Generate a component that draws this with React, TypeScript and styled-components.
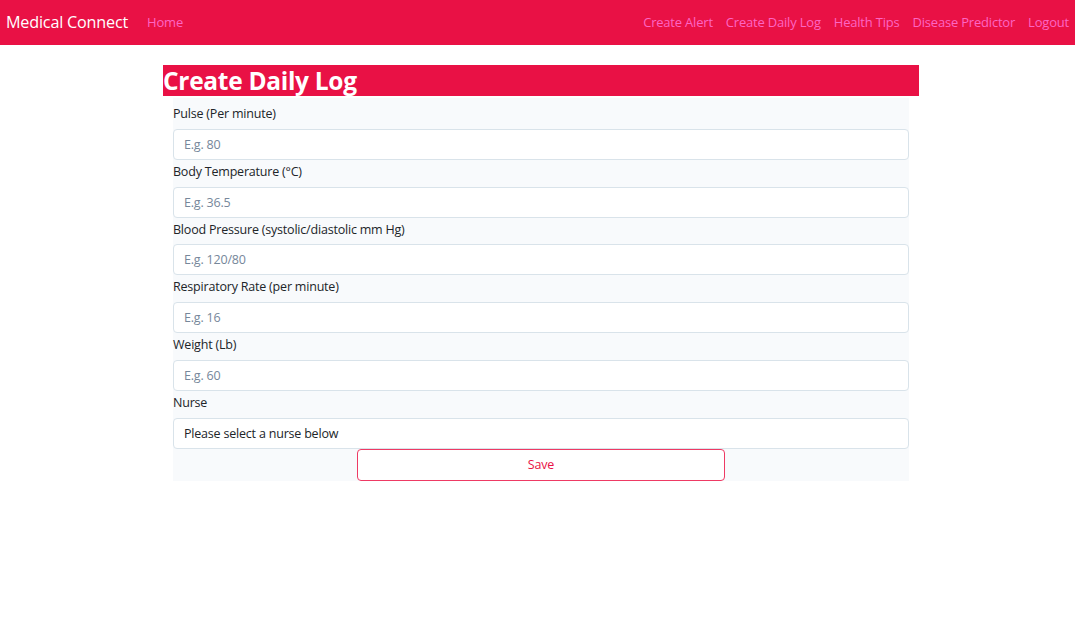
import React from "react";
import styled, { createGlobalStyle } from "styled-components";

const Global = createGlobalStyle`
  html, body { margin: 0; padding: 0; background: #fff; }
  body { font-family: "Open Sans", "Noto Sans", Arial, sans-serif; color: #212529; }
  * { box-sizing: border-box; }
`;

const Navbar = styled.nav`
  height: 45px;
  background: #e91145;
  display: flex;
  align-items: center;
  justify-content: space-between;
  padding: 0 6px 1px;
`;

const Left = styled.div`
  display: flex;
  align-items: center;
  gap: 19px;
`;

const Brand = styled.a`
  color: #fff;
  font-size: 16.2px;
  letter-spacing: -0.2px;
  text-decoration: none;
`;

const NavLinks = styled.div`
  display: flex;
  align-items: center;
  gap: 13px;
`;

const NavLink = styled.a`
  color: #fd65c4;
  font-size: 13px;
  letter-spacing: -0.2px;
  text-decoration: none;
`;

const Main = styled.main`
  width: 756px;
  margin: 20px 0 0 163px;
`;

const Title = styled.h1`
  margin: 0;
  height: 31px;
  background: #e91145;
  color: #fff;
  font-size: 24.5px;
  font-weight: 700;
  line-height: 31px;
  letter-spacing: -0.3px;
`;

const Form = styled.form`
  margin: 2px 10px 0;
  padding-top: 4px;
  background: #f8fafc;
  display: flex;
  flex-direction: column;
`;

const Field = styled.div`
  display: flex;
  flex-direction: column;
`;

const Label = styled.label`
  font-size: 12.5px;
  letter-spacing: -0.2px;
  height: 26.8px;
  line-height: 23px;
  color: #212529;
`;

const Input = styled.input`
  height: 31px;
  border: 1px solid #d9e3ea;
  border-radius: 4px;
  background: #fff;
  padding: 0 10px;
  font-family: inherit;
  font-size: 12.5px;
  letter-spacing: -0.2px;
  color: #212529;
  outline: none;
  &::placeholder { color: #76879a; }
`;

const Select = styled.div`
  height: 31px;
  border: 1px solid #d9e3ea;
  border-radius: 4px;
  background: #fff;
  padding: 0 10px;
  font-size: 12.5px;
  letter-spacing: -0.2px;
  display: flex;
  align-items: center;
  color: #212529;
`;

const Button = styled.button`
  align-self: center;
  width: 368px;
  height: 32px;
  background: #fff;
  border: 1px solid #ee3a64;
  border-radius: 4px;
  color: #e91145;
  font-family: inherit;
  font-size: 12.5px;
  letter-spacing: -0.2px;
`;

const fields = [
  { label: "Pulse (Per minute)", ph: "E.g. 80" },
  { label: "Body Temperature (°C)", ph: "E.g. 36.5" },
  { label: "Blood Pressure (systolic/diastolic mm Hg)", ph: "E.g. 120/80" },
  { label: "Respiratory Rate (per minute)", ph: "E.g. 16" },
  { label: "Weight (Lb)", ph: "E.g. 60" },
];

export default function App() {
  return (
    <>
      <Global />
      <Navbar>
        <Left>
          <Brand href="#">Medical Connect</Brand>
          <NavLink href="#">Home</NavLink>
        </Left>
        <NavLinks>
          <NavLink href="#">Create Alert</NavLink>
          <NavLink href="#">Create Daily Log</NavLink>
          <NavLink href="#">Health Tips</NavLink>
          <NavLink href="#">Disease Predictor</NavLink>
          <NavLink href="#">Logout</NavLink>
        </NavLinks>
      </Navbar>
      <Main>
        <Title>Create Daily Log</Title>
        <Form onSubmit={(e) => e.preventDefault()}>
          {fields.map((f) => (
            <Field key={f.label}>
              <Label>{f.label}</Label>
              <Input placeholder={f.ph} />
            </Field>
          ))}
          <Field>
            <Label>Nurse</Label>
            <Select>Please select a nurse below</Select>
          </Field>
          <Button type="submit">Save</Button>
        </Form>
      </Main>
    </>
  );
}
